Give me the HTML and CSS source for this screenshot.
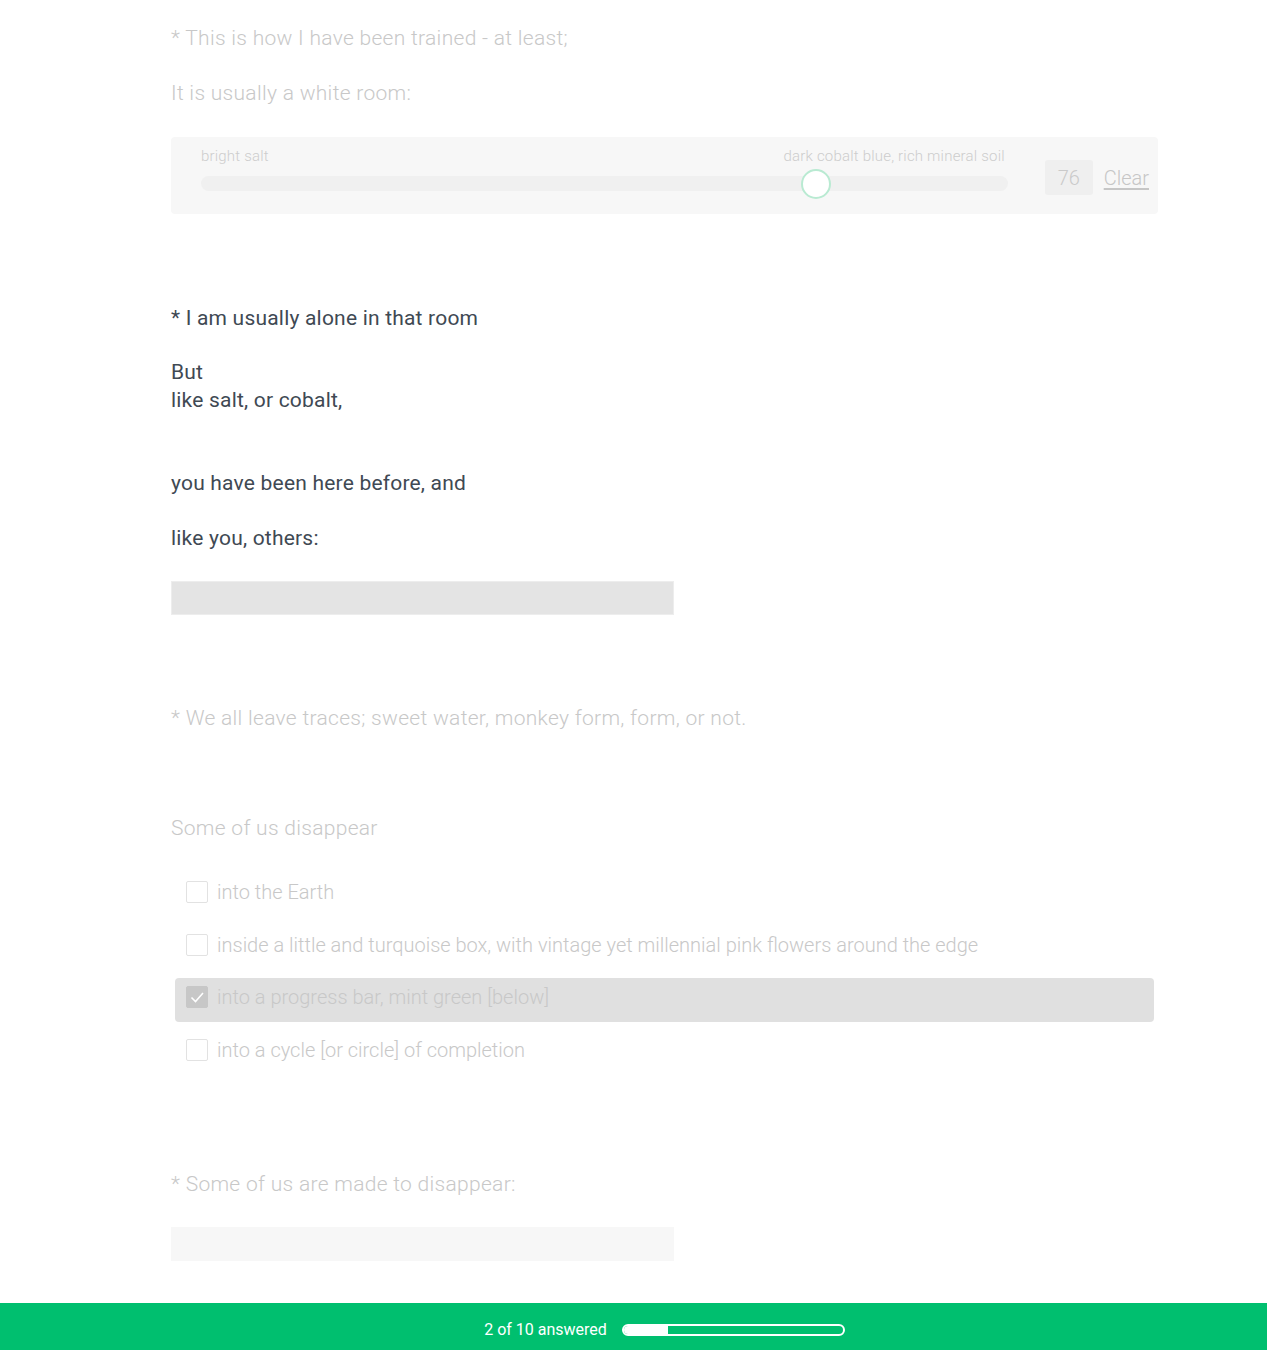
FILE: index.html
```html
<!DOCTYPE html>
<html>
<head>
<meta charset="utf-8">
<link rel="stylesheet" href="styles.css">
</head>
<body>
<main class="survey">
  <p class="q muted l1">* This is how I have been trained - at least;</p>
  <p class="q muted l2">It is usually a white room:</p>
  <div class="slider-box">
    <div class="slider-main">
      <div class="slider-labels"><span>bright salt</span><span>dark cobalt blue, rich mineral soil</span></div>
      <div class="track"><span class="thumb" style="left: 76.2%"></span></div>
    </div>
    <div class="value">76</div>
    <a class="clear">Clear</a>
  </div>

  <p class="q dark l3">* I am usually alone in that room</p>
  <p class="q dark l4">But<br>like salt, or cobalt,</p>
  <p class="q dark l5">you have been here before, and</p>
  <p class="q dark l6">like you, others:</p>
  <div class="input input-a"></div>

  <p class="q muted l7">* We all leave traces; sweet water, monkey form, form, or not.</p>
  <p class="q muted l8">Some of us disappear</p>
  <div class="options">
    <div class="opt"><span class="cb"></span><span>into the Earth</span></div>
    <div class="opt"><span class="cb"></span><span>inside a little and turquoise box, with vintage yet millennial pink flowers around the edge</span></div>
    <div class="opt sel"><span class="cb on"><svg viewBox="0 0 22 22" width="22" height="22"><path d="M5.5 11.5 L9.5 15.5 L17 7" fill="none" stroke="#fff" stroke-width="1.6"/></svg></span><span>into a progress bar, mint green [below]</span></div>
    <div class="opt"><span class="cb"></span><span>into a cycle [or circle] of completion</span></div>
  </div>

  <p class="q muted l9">* Some of us are made to disappear:</p>
  <div class="input input-b"></div>
</main>
<footer class="footer">
  <span class="count">2 of 10 answered</span>
  <span class="progress"><span class="fill" style="width: 20%"></span></span>
</footer>
</body>
</html>
```
FILE: styles.css
```css
html, body { margin: 0; padding: 0; background: #fff; }
body { font-family: Roboto, "Noto Sans", sans-serif; height: 1350px; overflow: hidden; position: relative; }
.survey { width: 987px; margin-left: 171px; padding-top: 24px; }
.q { margin: 0; font-size: 21px; line-height: 28px; }
.muted { color: #c8c8c8; font-weight: 300; letter-spacing: 0.3px; }
.dark { color: #404953; letter-spacing: 0.2px; }
.l2 { margin-top: 27px; }
.slider-box { margin-top: 30px; height: 77px; box-sizing: border-box; background: #f7f7f7; border-radius: 4px; display: flex; align-items: flex-start; padding: 10px 9px 0 30px; }
.slider-main { width: 808px; }
.slider-labels { display: flex; justify-content: space-between; font-size: 15px; line-height: 18px; color: #cdcdcd; font-weight: 300; letter-spacing: 0.2px; padding-right: 3px; }
.track { position: relative; height: 15px; margin-top: 11px; background: #f0f0f0; border-radius: 8px; }
.thumb { position: absolute; top: 50%; width: 26px; height: 26px; margin: -15px 0 0 -15px; border: 2px solid #b9ead2; border-radius: 50%; background: #fff; }
.value { margin-top: 13px; margin-left: 37px; width: 48px; height: 35px; background: #efefef; border-radius: 3px; color: #cacaca; font-size: 20px; font-weight: 300; display: flex; align-items: center; justify-content: center; }
.clear { margin-top: 17px; margin-left: 11px; color: #c6c6c6; font-size: 20px; line-height: 28px; font-weight: 300; text-decoration: underline; text-underline-offset: 3px; }
.l3 { margin-top: 90px; }
.l4 { margin-top: 26px; }
.l5 { margin-top: 55px; }
.l6 { margin-top: 27px; }
.input { width: 503px; height: 34px; box-sizing: border-box; }
.input-a { margin-top: 29px; background: #e4e4e4; border: 1px solid #ededed; }
.l7 { margin-top: 89px; }
.l8 { margin-top: 82px; }
.options { margin-top: 31px; width: 979px; margin-left: 4px; display: flex; flex-direction: column; gap: 8.5px; }
.opt { height: 44px; display: flex; align-items: center; padding-left: 11px; border-radius: 4px; font-size: 20px; font-weight: 300; color: #c8c8c8; }
.opt span:last-child { margin-left: 9px; position: relative; top: -3px; }
.opt.sel { background: #e0e0e0; }
.cb { width: 22px; height: 22px; box-sizing: border-box; border: 1px solid #e2e2e2; border-radius: 2px; background: #fff; flex: none; position: relative; top: -3px; }
.cb.on { background: #c7c7c7; border-color: #c7c7c7; }
.cb.on svg { display: block; margin: -1px; }
.l9 { margin-top: 95px; }
.input-b { margin-top: 29px; background: #f7f7f7; }
.footer { position: absolute; left: 0; right: 0; bottom: 0; height: 47px; background: #00bf6f; display: flex; align-items: center; justify-content: center; padding: 6px 0 0 62px; box-sizing: border-box; }
.count { color: #fff; font-size: 16px; }
.progress { margin-left: 15px; width: 223px; height: 12px; box-sizing: border-box; border: 2px solid #fff; border-radius: 6px; overflow: hidden; }
.fill { display: block; height: 100%; background: #fff; }
```
